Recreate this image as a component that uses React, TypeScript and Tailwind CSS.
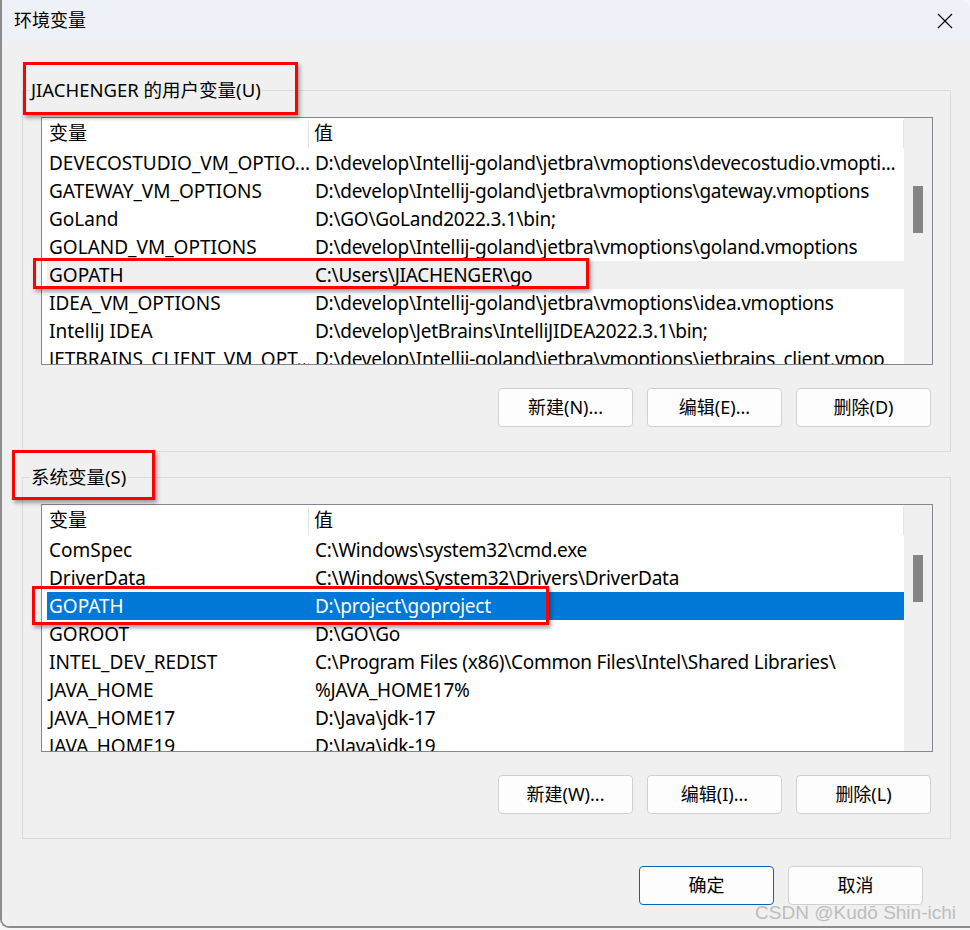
import React from 'react'

type Row = { name: string; value: string; sel?: 'gray' | 'blue' }

const userVars: Row[] = [
  { name: 'DEVECOSTUDIO_VM_OPTIO...', value: 'D:\\develop\\Intellij-goland\\jetbra\\vmoptions\\devecostudio.vmopti...' },
  { name: 'GATEWAY_VM_OPTIONS', value: 'D:\\develop\\Intellij-goland\\jetbra\\vmoptions\\gateway.vmoptions' },
  { name: 'GoLand', value: 'D:\\GO\\GoLand2022.3.1\\bin;' },
  { name: 'GOLAND_VM_OPTIONS', value: 'D:\\develop\\Intellij-goland\\jetbra\\vmoptions\\goland.vmoptions' },
  { name: 'GOPATH', value: 'C:\\Users\\JIACHENGER\\go', sel: 'gray' },
  { name: 'IDEA_VM_OPTIONS', value: 'D:\\develop\\Intellij-goland\\jetbra\\vmoptions\\idea.vmoptions' },
  { name: 'IntelliJ IDEA', value: 'D:\\develop\\JetBrains\\IntelliJIDEA2022.3.1\\bin;' },
  { name: 'JETBRAINS_CLIENT_VM_OPT...', value: 'D:\\develop\\Intellij-goland\\jetbra\\vmoptions\\jetbrains_client.vmop' },
]

const sysVars: Row[] = [
  { name: 'ComSpec', value: 'C:\\Windows\\system32\\cmd.exe' },
  { name: 'DriverData', value: 'C:\\Windows\\System32\\Drivers\\DriverData' },
  { name: 'GOPATH', value: 'D:\\project\\goproject', sel: 'blue' },
  { name: 'GOROOT', value: 'D:\\GO\\Go' },
  { name: 'INTEL_DEV_REDIST', value: 'C:\\Program Files (x86)\\Common Files\\Intel\\Shared Libraries\\' },
  { name: 'JAVA_HOME', value: '%JAVA_HOME17%' },
  { name: 'JAVA_HOME17', value: 'D:\\Java\\jdk-17' },
  { name: 'JAVA_HOME19', value: 'D:\\Java\\jdk-19' },
]

function VarList({ rows, thumbTop }: { rows: Row[]; thumbTop: string }) {
  return (
    <div className="mt-[15px] ml-[18px] mr-[17px] h-[248px] border border-[#828790] bg-white flex overflow-hidden">
      <div className="w-[862px] flex flex-col">
        {/* Header */}
        <div className="h-[31px] flex items-center shrink-0">
          <div className="w-[267px] h-[28px] pl-[7px] flex items-center border-r border-[#e5e5e5]">变量</div>
          <div className="flex-1 h-[28px] pl-[5px] flex items-center border-r border-[#e5e5e5]">值</div>
        </div>
        {rows.map((r) => (
          <div key={r.name} className="h-[28px] pl-[5px] shrink-0">
            <div
              className={
                r.sel === 'blue'
                  ? 'h-full flex items-center bg-[#0078d7] text-white'
                  : r.sel === 'gray'
                    ? 'h-full flex items-center bg-[#efefef]'
                    : 'h-full flex items-center'
              }
            >
              <span className="w-[262px] pl-[2px] whitespace-nowrap overflow-hidden">{r.name}</span>
              <span className="flex-1 pl-[6px] whitespace-nowrap overflow-hidden tracking-[-0.25px]">{r.value}</span>
            </div>
          </div>
        ))}
      </div>
      {/* Scrollbar */}
      <div className="flex-1 bg-[#f0f0f0] flex justify-center">
        <div className={`w-[10px] h-[47px] bg-[#858585] ${thumbTop}`} />
      </div>
    </div>
  )
}

function Btn({ label, primary }: { label: string; primary?: boolean }) {
  return (
    <button
      className={
        primary
          ? 'w-[135px] h-[39px] rounded-[4px] bg-[#fdfdfd] border border-[#0067c0] text-[18px]'
          : 'w-[135px] h-[39px] rounded-[4px] bg-[#fdfdfd] border border-[#d0d0d0] text-[18px]'
      }
    >
      {label}
    </button>
  )
}

function GroupBox({ title, rows, thumbTop, buttons }: { title: string; rows: Row[]; thumbTop: string; buttons: string[] }) {
  return (
    <div className="w-[929px] h-[362px] border border-[#dcdcdc] flex flex-col">
      <div className="-mt-[13px] ml-[7px] px-[1px] h-[24px] leading-[24px] w-fit bg-[#f0f0f0] text-[18.5px]">{title}</div>
      <VarList rows={rows} thumbTop={thumbTop} />
      <div className="mt-[23px] mr-[19px] flex justify-end gap-[14px]">
        {buttons.map((b) => (
          <Btn key={b} label={b} />
        ))}
      </div>
    </div>
  )
}

export default function App() {
  return (
    <div
      className="relative w-[970px] h-[930px] bg-[#f7f7f7] overflow-hidden text-[19px] text-black"
      style={{ fontFamily: '"Noto Sans", "Noto Sans CJK SC", sans-serif' }}
    >
      <div className="h-[928px] flex flex-col border-l-2 border-b-2 border-[#8c8c8c] rounded-bl-[9px] rounded-tr-[9px] overflow-hidden">
        {/* Title bar */}
        <div className="h-[41px] bg-[#eef2f8] flex items-center justify-between pl-[12px] pr-[17px] shrink-0">
          <span className="text-[18px]">环境变量</span>
          <svg width="16" height="16" viewBox="0 0 16 16" className="text-black">
            <path d="M1 1L15 15M15 1L1 15" stroke="currentColor" strokeWidth="1.2" fill="none" />
          </svg>
        </div>

        {/* Body */}
        <div className="flex-1 bg-[#f0f0f0] pl-[20px] pt-[49px] flex flex-col">
          <GroupBox
            title="JIACHENGER 的用户变量(U)"
            rows={userVars}
            thumbTop="mt-[68px]"
            buttons={['新建(N)...', '编辑(E)...', '删除(D)']}
          />
          <div className="mt-[25px]">
            <GroupBox
              title="系统变量(S)"
              rows={sysVars}
              thumbTop="mt-[50px]"
              buttons={['新建(W)...', '编辑(I)...', '删除(L)']}
            />
          </div>
          <div className="w-[929px] mt-[27px] pr-[28px] flex justify-end gap-[14px]">
            <Btn label="确定" primary />
            <Btn label="取消" />
          </div>
        </div>
      </div>

      {/* Red annotation boxes */}
      <div className="absolute left-[23px] top-[62px] w-[275px] h-[53px] border-[3px] border-[#ff0000] shadow-[2px_3px_4px_rgba(0,0,0,0.35)]" />
      <div className="absolute left-[33px] top-[258px] w-[556px] h-[31px] border-[3px] border-[#ff0000] shadow-[2px_3px_4px_rgba(0,0,0,0.35)]" />
      <div className="absolute left-[12px] top-[450px] w-[143px] h-[50px] border-[3px] border-[#ff0000] shadow-[2px_3px_4px_rgba(0,0,0,0.35)]" />
      <div className="absolute left-[32px] top-[586px] w-[517px] h-[39px] border-[3px] border-[#ff0000] shadow-[2px_3px_4px_rgba(0,0,0,0.35)]" />

      {/* Watermark */}
      <div
        className="absolute right-[14px] bottom-[3px] text-[19px] text-[#bdbdbd]"
        style={{ fontFamily: '"Liberation Sans", Arial, sans-serif' }}
      >
        CSDN @Kudō Shin-ichi
      </div>
    </div>
  )
}
